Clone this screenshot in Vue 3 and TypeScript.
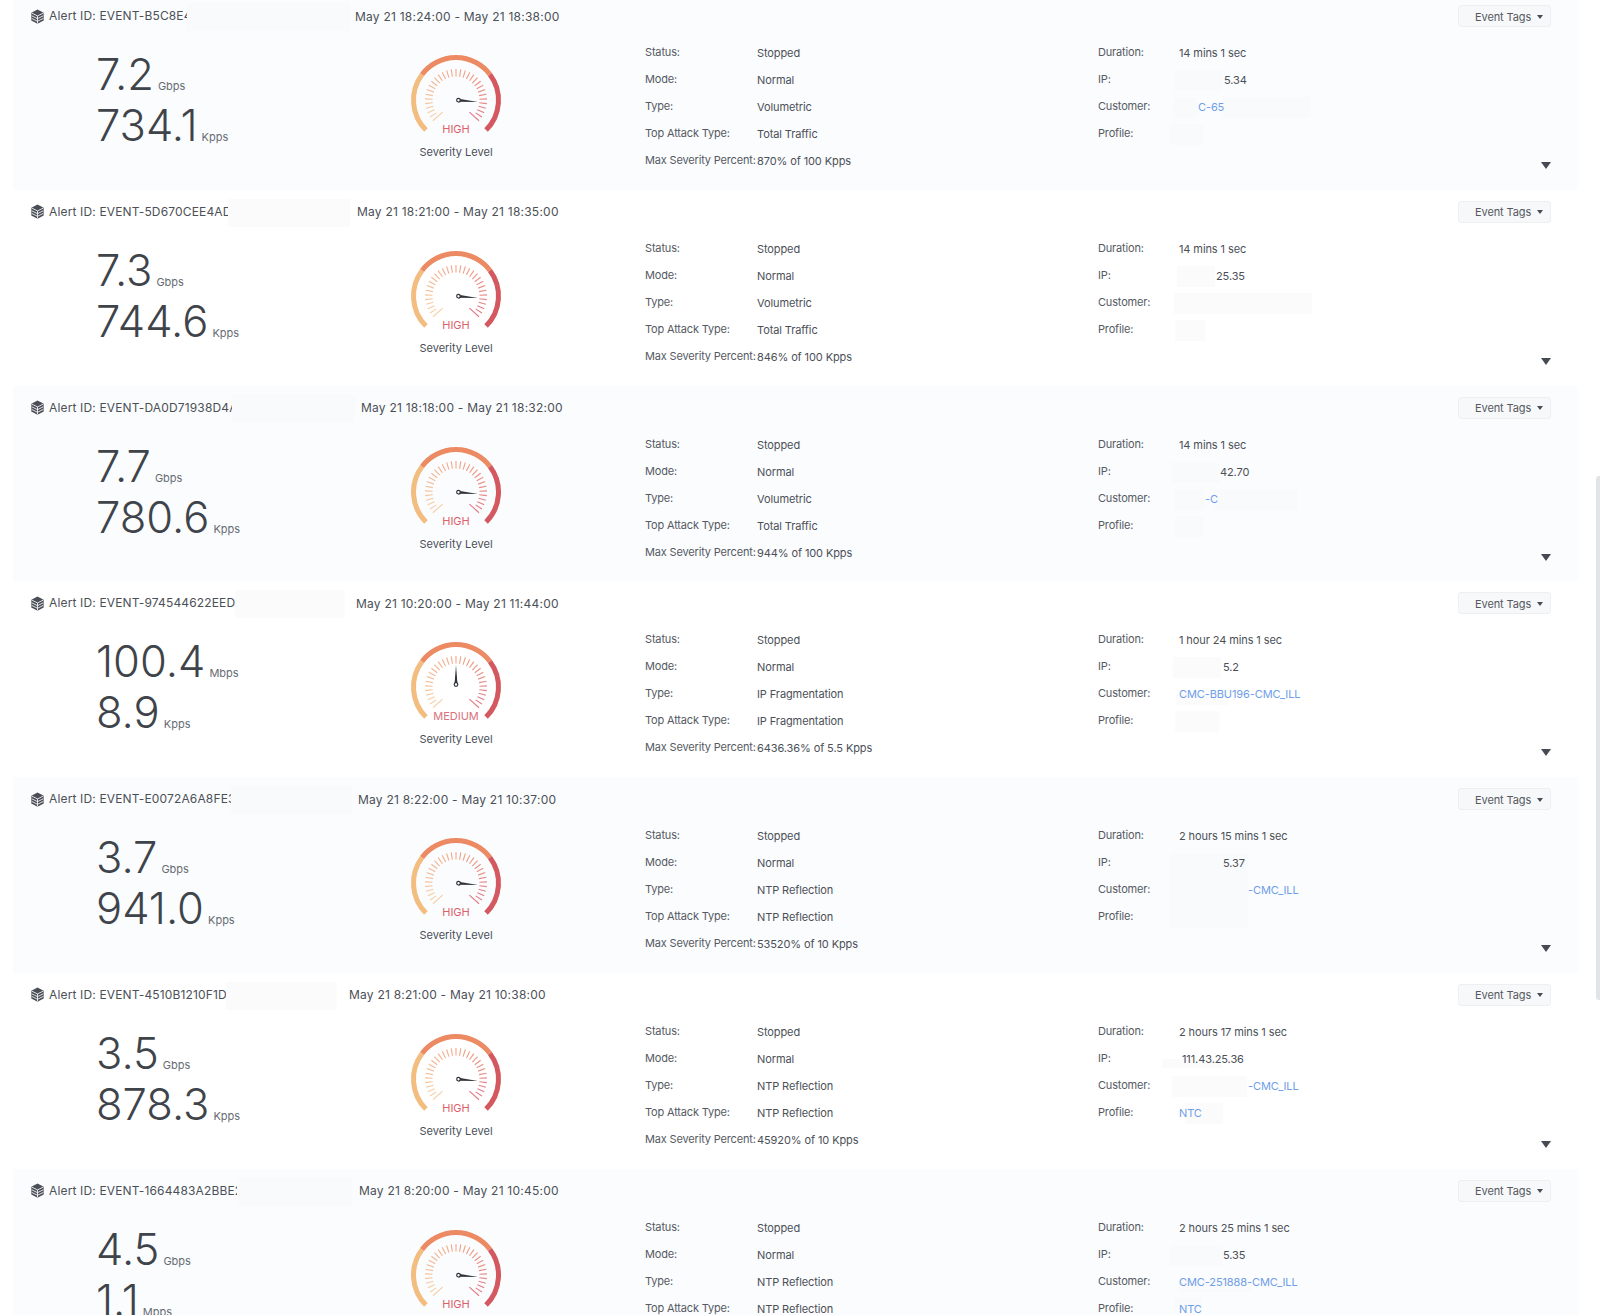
<script setup lang="ts">
interface Over { x: number; y?: number; w: number; h?: number }
interface Cell { text?: string; pad?: number; link?: boolean; over?: Over[] }
interface Alert {
  id: string; patchX: number; patchW: number; dateX: number; date: string;
  a: string; au: string; b: string; bu: string;
  level: string; angle: number; type: string; top: string; max: string;
  duration: string; ip: Cell; customer: Cell; profile: Cell;
}

const alerts: Alert[] = [
  { id: 'EVENT-B5C8E4A1', patchX: 187, patchW: 163, dateX: 355, date: 'May 21 18:24:00 - May 21 18:38:00',
    a: '7.2', au: 'Gbps', b: '734.1', bu: 'Kpps', level: 'HIGH', angle: 95, type: 'Volumetric', top: 'Total Traffic', max: '870% of 100 Kpps',
    duration: '14 mins 1 sec',
    ip: { text: '5.34', pad: 45, over: [{ x: -5, w: 48 }] },
    customer: { text: 'C-65', pad: 19, link: true, over: [{ x: -6, w: 24 }, { x: 44, w: 88 }] },
    profile: { over: [{ x: -9, w: 33 }] } },
  { id: 'EVENT-5D670CEE4ADB', patchX: 228, patchW: 122, dateX: 357, date: 'May 21 18:21:00 - May 21 18:35:00',
    a: '7.3', au: 'Gbps', b: '744.6', bu: 'Kpps', level: 'HIGH', angle: 95, type: 'Volumetric', top: 'Total Traffic', max: '846% of 100 Kpps',
    duration: '14 mins 1 sec',
    ip: { text: '25.35', pad: 37, over: [{ x: -2, w: 38 }] },
    customer: { over: [{ x: -5, w: 40 }, { x: 35, w: 98 }] },
    profile: { over: [{ x: -4, w: 30 }] } },
  { id: 'EVENT-DA0D71938D4A', patchX: 232, patchW: 123, dateX: 361, date: 'May 21 18:18:00 - May 21 18:32:00',
    a: '7.7', au: 'Gbps', b: '780.6', bu: 'Kpps', level: 'HIGH', angle: 95, type: 'Volumetric', top: 'Total Traffic', max: '944% of 100 Kpps',
    duration: '14 mins 1 sec',
    ip: { text: '42.70', pad: 41, over: [{ x: -7, w: 47 }] },
    customer: { text: '-C', pad: 26, link: true, over: [{ x: -5, w: 30 }, { x: 34, w: 85 }] },
    profile: { over: [{ x: -4, w: 28 }] } },
  { id: 'EVENT-974544622EED5', patchX: 235, patchW: 110, dateX: 356, date: 'May 21 10:20:00 - May 21 11:44:00',
    a: '100.4', au: 'Mbps', b: '8.9', bu: 'Kpps', level: 'MEDIUM', angle: 0, type: 'IP Fragmentation', top: 'IP Fragmentation', max: '6436.36% of 5.5 Kpps',
    duration: '1 hour 24 mins 1 sec',
    ip: { text: '5.2', pad: 44, over: [{ x: -6, w: 48 }] },
    customer: { text: 'CMC-BBU196-CMC_ILL', link: true, over: [{ x: -3, y: 13, w: 52, h: 11 }] },
    profile: { over: [{ x: -4, w: 44 }] } },
  { id: 'EVENT-E0072A6A8FE3', patchX: 231, patchW: 121, dateX: 358, date: 'May 21 8:22:00 - May 21 10:37:00',
    a: '3.7', au: 'Gbps', b: '941.0', bu: 'Kpps', level: 'HIGH', angle: 95, type: 'NTP Reflection', top: 'NTP Reflection', max: '53520% of 10 Kpps',
    duration: '2 hours 15 mins 1 sec',
    ip: { text: '5.37', pad: 44, over: [{ x: -9, y: 3, w: 78, h: 24 }] },
    customer: { text: '-CMC_ILL', pad: 69, link: true, over: [{ x: -9, y: 0, w: 78, h: 27 }] },
    profile: { over: [{ x: -9, y: 0, w: 78, h: 24 }] } },
  { id: 'EVENT-4510B1210F1D7', patchX: 226, patchW: 111, dateX: 349, date: 'May 21 8:21:00 - May 21 10:38:00',
    a: '3.5', au: 'Gbps', b: '878.3', bu: 'Kpps', level: 'HIGH', angle: 95, type: 'NTP Reflection', top: 'NTP Reflection', max: '45920% of 10 Kpps',
    duration: '2 hours 17 mins 1 sec',
    ip: { text: '111.43.25.36', pad: 3, over: [{ x: -17, y: 13, w: 60, h: 9 }] },
    customer: { text: '-CMC_ILL', pad: 69, link: true, over: [{ x: -7, w: 75 }] },
    profile: { text: 'NTC', link: true, over: [{ x: 6, w: 38 }] } },
  { id: 'EVENT-1664483A2BBE2', patchX: 237, patchW: 115, dateX: 359, date: 'May 21 8:20:00 - May 21 10:45:00',
    a: '4.5', au: 'Gbps', b: '1.1', bu: 'Mpps', level: 'HIGH', angle: 95, type: 'NTP Reflection', top: 'NTP Reflection', max: '53900% of 10 Kpps',
    duration: '2 hours 25 mins 1 sec',
    ip: { text: '5.35', pad: 44, over: [{ x: -9, w: 53 }] },
    customer: { text: 'CMC-251888-CMC_ILL', link: true, over: [{ x: -1, y: 12, w: 74, h: 11 }] },
    profile: { text: 'NTC', link: true, over: [{ x: -5, y: 1, w: 28, h: 12 }] } },
]

const toXY = (r: number, deg: number) => {
  const t = (deg - 90) * Math.PI / 180
  return { x: 50 + r * Math.cos(t), y: 50 + r * Math.sin(t) }
}

const arc = (from: number, to: number) => {
  const s = toXY(42.5, from)
  const e = toXY(42.5, to)
  return `M${s.x.toFixed(2)} ${s.y.toFixed(2)}A42.5 42.5 0 0 1 ${e.x.toFixed(2)} ${e.y.toFixed(2)}`
}

const mix = (c1: number[], c2: number[], t: number) =>
  `rgb(${c1.map((v, i) => Math.round(v + (c2[i] - v) * t)).join(',')})`

const ticks = Array.from({ length: 31 }, (_, i) => {
  const deg = -132 + i * 8.8
  const long = i === 0 || i === 30
  const a = toXY(long ? 18 : 23.5, deg)
  const b = toXY(31, deg)
  const p = i / 30
  const color = p < 0.5
    ? mix([248, 208, 165], [242, 165, 135], p * 2)
    : mix([242, 165, 135], [226, 120, 130], (p - 0.5) * 2)
  return { x1: a.x, y1: a.y, x2: b.x, y2: b.y, color }
})

const needle = (deg: number) => `rotate(${deg} 50 50)`
</script>

<template>
  <div class="page">
    <div class="list">
      <section v-for="al in alerts" :key="al.id" class="row">
        <header class="head">
          <svg class="cube" viewBox="0 0 16 16" aria-hidden="true">
            <path d="M8 .6 14.6 4v8.2L8 15.6 1.4 12.200V4z" fill="#4a4f57" />
            <path d="M1.800 4.300 8 7.400l6.200-3.100M1.800 7.200 8 10.300l6.200-3.100M1.800 10 8 13.100l6.200-3.100M8 7.400v8" fill="none" stroke="#fbfcfe" stroke-width=".9" />
          </svg>
          <div class="id" :style="{ width: al.dateX - 49 + 'px' }">
            <span>Alert ID: {{ al.id }}</span>
            <i class="patch head-patch" :style="{ left: al.patchX - 49 + 'px', width: al.patchW + 'px' }"></i>
          </div>
          <span class="date">{{ al.date }}</span>
          <button class="tags" type="button">Event Tags<i class="caret"></i></button>
        </header>
        <div class="body">
          <div class="metrics">
            <div class="metric"><span class="num">{{ al.a }}</span><span class="unit">{{ al.au }}</span></div>
            <div class="metric"><span class="num">{{ al.b }}</span><span class="unit">{{ al.bu }}</span></div>
          </div>
          <div class="gauge">
            <svg class="dial" viewBox="0 0 100 100" aria-hidden="true">
              <path :d="arc(-135, -53)" class="seg" stroke="#f3bd80" />
              <path :d="arc(-53, 53)" class="seg" stroke="#ec8a64" />
              <path :d="arc(53, 135)" class="seg" stroke="#d4585f" />
              <line v-for="(t, i) in ticks" :key="i" :x1="t.x1" :y1="t.y1" :x2="t.x2" :y2="t.y2" :stroke="t.color" stroke-width="1.100" />
              <g :transform="needle(al.angle)">
                <path d="M48.500 47.500 50 28 51.500 47.500z" fill="#2f343a" />
                <circle cx="50" cy="47.500" r="1.800" fill="#fff" stroke="#2f343a" stroke-width="1.200" />
              </g>
            </svg>
            <div class="level" :class="{ medium: al.level === 'MEDIUM' }">{{ al.level }}</div>
            <div class="cap">Severity Level</div>
          </div>
          <dl class="details first">
            <dt>Status:</dt><dd>Stopped</dd>
            <dt>Mode:</dt><dd>Normal</dd>
            <dt>Type:</dt><dd>{{ al.type }}</dd>
            <dt>Top Attack Type:</dt><dd>{{ al.top }}</dd>
            <dt>Max Severity Percent:</dt><dd>{{ al.max }}</dd>
          </dl>
          <dl class="details second">
            <dt>Duration:</dt><dd>{{ al.duration }}</dd>
            <template v-for="f in [{ l: 'IP:', c: al.ip }, { l: 'Customer:', c: al.customer }, { l: 'Profile:', c: al.profile }]" :key="f.l">
              <dt>{{ f.l }}</dt>
              <dd class="cell">
                <i v-for="(o, n) in f.c.over" :key="n" class="patch"
                  :style="{ left: o.x + 'px', top: (o.y ?? 3) + 'px', width: o.w + 'px', height: (o.h ?? 21) + 'px' }"></i>
                <span v-if="f.c.text && !f.c.link" class="ctext" :style="{ marginLeft: (f.c.pad ?? 0) + 'px' }">{{ f.c.text }}</span>
                <a v-else-if="f.c.text" class="link" :style="{ marginLeft: (f.c.pad ?? 0) + 'px' }">{{ f.c.text }}</a>
              </dd>
            </template>
          </dl>
        </div>
        <i class="expand"></i>
      </section>
    </div>
    <div class="scrollbar"></div>
  </div>
</template>

<style>
html, body { margin: 0; background: #fff; overflow: hidden; }
</style>

<style scoped>
.page {
  position: relative;
  height: 1315px;
  overflow: hidden;
  background: #fff;
  font-family: Inter, "Liberation Sans", sans-serif;
  color: #4b5057;
  font-size: 11px;
}
.scrollbar {
  position: absolute;
  right: 0;
  top: 476px;
  width: 4px;
  height: 524px;
  border-radius: 3px 0 0 3px;
  background: #e2e5e8;
}
.list { margin-top: -6px; padding: 0 22px 0 13px; }
.row {
  position: relative;
  height: 195.800px;
  box-sizing: border-box;
  padding-top: 11px;
  background: #fff;
  --patch: #fbfbfc;
}
.row:nth-child(odd) { background: #fbfcfe; --patch: #f9fafb; }
.patch { position: absolute; display: block; background: var(--patch); }
.head {
  display: flex;
  align-items: center;
  height: 22px;
  padding-left: 17px;
  padding-right: 27px;
  font-size: 12px;
  letter-spacing: .23px;
}
.cube { width: 15px; height: 15px; margin-right: 4px; flex: none; }
.id { position: relative; flex: none; white-space: nowrap; overflow: visible; height: 22px; line-height: 22px; letter-spacing: .15px; }
.id span { white-space: nowrap; }
.head-patch { top: -2px; height: 28px; }
.date { position: relative; white-space: nowrap; }
.tags {
  margin-left: auto;
  width: 93px;
  height: 22px;
  padding: 1px 7px 0 16px;
  display: flex;
  align-items: center;
  justify-content: space-between;
  border: 1px solid #eeeff1;
  border-radius: 3px;
  background: #f7f8f9;
  color: #55595f;
  font: 11px Inter, "Liberation Sans", sans-serif;
  letter-spacing: -.1px;
}
.caret { width: 0; height: 0; border: 3.500px solid transparent; border-top: 4px solid #484d54; border-bottom: 0; }
.body {
  display: grid;
  grid-template-columns: 310px 239px 453px 1fr;
  padding: 13px 0 0 83px;
}
.metrics { padding-top: 9px; }
.metric { display: flex; align-items: baseline; height: 51px; }
.num { font-size: 43.500px; line-height: 51px; font-weight: 300; color: #3f444b; }
.unit { margin-left: 4px; font-size: 11px; color: #676c73; }
.gauge { position: relative; width: 100px; height: 130px; text-align: center; }
.dial { display: block; width: 100px; height: 100px; margin-top: 10px; }
.seg { fill: none; stroke-width: 5; }
.level {
  position: absolute;
  left: 0; right: 0;
  top: 82px;
  font-size: 11px;
  line-height: 14px;
  color: #dd5f68;
}
.level.medium { color: #d9727c; }
.cap { position: absolute; left: -10px; right: -10px; top: 105px; font-size: 11px; line-height: 14px; color: #4a4f57; }
.details {
  margin: 0;
  display: grid;
  grid-template-columns: 112px 1fr;
  grid-auto-rows: 27px;
  align-content: start;
  padding-top: 0;
}
.details.second { grid-template-columns: 81px 1fr; }
dt { line-height: 24px; color: #555a62; white-space: nowrap; letter-spacing: -.17px; }
dd { margin: 0; line-height: 26px; white-space: nowrap; color: #4b5057; letter-spacing: -.1px; }
.cell { position: relative; height: 26px; }
.ctext, .link { position: relative; }
.link { color: #6f9ee8; }
.expand {
  position: absolute;
  right: 27px;
  top: 168px;
  width: 0; height: 0;
  border-left: 5px solid transparent;
  border-right: 5px solid transparent;
  border-top: 7px solid #444b52;
}
</style>
